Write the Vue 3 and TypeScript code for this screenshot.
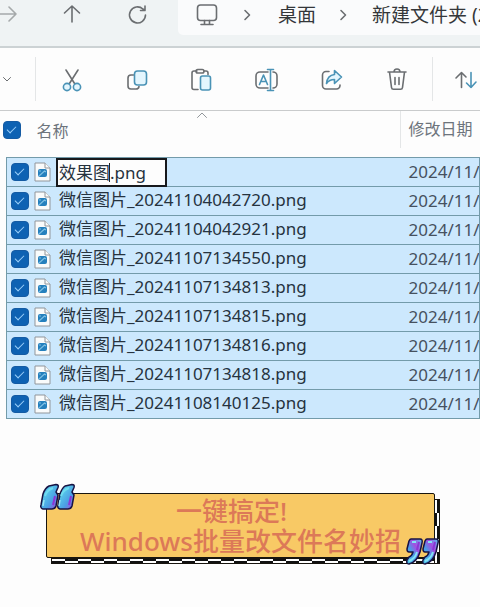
<script setup lang="ts">
import { ref } from 'vue'

interface FileRow {
  id: number
  name: string
  date: string
  selected: boolean
}

const names: string[] = [
  '效果图.png',
  '微信图片_20241104042720.png',
  '微信图片_20241104042921.png',
  '微信图片_20241107134550.png',
  '微信图片_20241107134813.png',
  '微信图片_20241107134815.png',
  '微信图片_20241107134816.png',
  '微信图片_20241107134818.png',
  '微信图片_20241108140125.png',
]

const files = ref<FileRow[]>(
  names.map((name, id) => ({ id, name, date: '2024/11/', selected: true })),
)
const renaming = ref(0)
const allSelected = ref(true)

function toggleAll() {
  files.value.forEach((file) => (file.selected = allSelected.value))
}
</script>

<template>
  <main class="explorer">
    <nav class="nav">
      <button class="nav-btn forward" aria-label="前进">
        <svg width="24" height="24" viewBox="0 0 24 24"><path d="M3 12h17M13 5l7 7-7 7" /></svg>
      </button>
      <button class="nav-btn" aria-label="向上">
        <svg width="24" height="24" viewBox="0 0 24 24"><path d="M12 20V4M4.500 11L12 4l7.500 7" /></svg>
      </button>
      <button class="nav-btn" aria-label="刷新">
        <svg width="24" height="24" viewBox="0 0 24 24"><path d="M20.500 13a8 8 0 1 1-2.600-6L20 8.500M20 4v4.500h-4.500" /></svg>
      </button>
      <div class="address">
        <svg class="monitor" width="24" height="24" viewBox="0 0 24 24">
          <rect x="2.500" y="2" width="19" height="15.500" rx="3" />
          <path d="M9.500 17.500v4M14.500 17.500v4M6 21.500h12" />
        </svg>
        <svg class="sep" width="12" height="12" viewBox="0 0 12 12"><path d="M4 1.500l4.500 4.500L4 10.500" /></svg>
        <a class="crumb" href="#desktop">桌面</a>
        <svg class="sep" width="12" height="12" viewBox="0 0 12 12"><path d="M4 1.500l4.500 4.500L4 10.500" /></svg>
        <a class="crumb" href="#folder">新建文件夹 (2</a>
      </div>
    </nav>

    <div class="toolbar" role="toolbar" aria-label="文件操作">
      <button class="more" aria-label="新建">
        <svg width="10" height="10" viewBox="0 0 10 10"><path d="M1.500 3.500L5 7l3.500-3.500" /></svg>
      </button>
      <div class="actions">
        <button class="tool" aria-label="剪切">
          <svg width="26" height="26" viewBox="0 0 26 26">
            <path d="M7 3l9.500 15M19 3L9.500 18" />
            <g class="blue fill"><circle cx="8" cy="20" r="3.600" /><circle cx="18" cy="20" r="3.600" /></g>
          </svg>
        </button>
        <button class="tool" aria-label="复制">
          <svg width="26" height="26" viewBox="0 0 26 26">
            <path d="M9.500 8H7a3 3 0 0 0-3 3v8a3 3 0 0 0 3 3h5a3 3 0 0 0 3-2.500" />
            <rect class="blue fill" x="10.500" y="4" width="12" height="14" rx="3" />
          </svg>
        </button>
        <button class="tool" aria-label="粘贴">
          <svg width="26" height="26" viewBox="0 0 26 26">
            <path d="M8 4H5a2 2 0 0 0-2 2v14.500a2 2 0 0 0 2 2h4M15 4h2a2 2 0 0 1 2 2v1.500" />
            <rect x="7" y="2.500" width="8" height="3.500" rx="1.750" />
            <rect class="blue fill" x="11.500" y="9" width="10" height="14" rx="2" />
          </svg>
        </button>
        <button class="tool" aria-label="重命名">
          <svg width="26" height="26" viewBox="0 0 26 26">
            <path d="M14 5H6a4 4 0 0 0-4 4v8a4 4 0 0 0 4 4h8M19 5a4 4 0 0 1 4 4v8a4 4 0 0 1-4 4" />
            <path class="blue" d="M16.500 3v20M13.500 2.500h6M13.500 23.500h6M5.500 17.500L9.500 8l4 9.500M7 14.500h5" />
          </svg>
        </button>
        <button class="tool" aria-label="共享">
          <svg width="26" height="26" viewBox="0 0 26 26">
            <path d="M10 4.500H7a3.500 3.500 0 0 0-3.500 3.500v10.500A3.500 3.500 0 0 0 7 22h10.500a3.500 3.500 0 0 0 3.500-3.500V18" />
            <path class="blue fill" d="M15.500 3.500L22.500 10l-7 6.500v-4c-4 0-6 1-8 4 .500-5 3-8.500 8-9z" />
          </svg>
        </button>
        <button class="tool" aria-label="删除">
          <svg width="26" height="26" viewBox="0 0 26 26">
            <path d="M4 5h18M10 5a3 3 0 0 1 6 0M5.500 5l2 15.500a2 2 0 0 0 2 1.800h7a2 2 0 0 0 2-1.800l2-15.500M11 10.500v7M15 10.500v7" />
          </svg>
        </button>
      </div>
      <button class="tool sort" aria-label="排序">
        <svg width="26" height="26" viewBox="0 0 26 26">
          <path d="M8.500 20.500v-15M3 11l5.500-5.500L13 10" />
          <path class="blue" d="M18 5.500v15M13.500 16l4.500 4.500L23 15" />
        </svg>
      </button>
    </div>

    <table class="list">
      <thead>
        <tr>
          <th class="name-col" scope="col">
            <svg class="sorted" width="12" height="8" viewBox="0 0 12 8"><path d="M1.500 6.500L6 2l4.500 4.500" /></svg>
            <div class="head-name">
              <input v-model="allSelected" class="check" type="checkbox" aria-label="全选" @change="toggleAll" />
              <span>名称</span>
            </div>
          </th>
          <th class="date-col" scope="col"><div class="head-date">修改日期</div></th>
        </tr>
      </thead>
      <tbody>
        <tr v-for="file in files" :key="file.id" :class="{ selected: file.selected }">
          <td>
            <div class="cell">
              <input :id="`file-${file.id}`" v-model="file.selected" class="check" type="checkbox" :aria-label="file.name" />
              <svg class="doc" width="17" height="20" viewBox="0 0 17 20">
                <path class="page" d="M1 1h10l5 5v13H1z" />
                <path class="page" d="M11 1v5h5" />
                <rect x="4" y="7" width="9" height="8" rx="2" fill="#2580bd" />
                <path d="M5 14l5.500-5L12 10M5 9h2" stroke="#7fc0e4" stroke-width="1.200" fill="none" />
              </svg>
              <span v-if="file.id === renaming" class="rename">
                <input v-model="file.name" class="rename-box" type="text" aria-label="文件名" />
                <i class="caret"></i>
              </span>
              <label v-else class="filename" :for="`file-${file.id}`">{{ file.name }}</label>
            </div>
          </td>
          <td class="date">{{ file.date }}</td>
        </tr>
      </tbody>
    </table>

    <section class="banner">
      <h1 class="title">
        <span class="line first">一键搞定!</span>
        <span class="line">Windows批量改文件名妙招</span>
      </h1>
      <svg class="quote open" width="36" height="28" viewBox="0 0 36 28">
        <defs>
          <linearGradient id="shine-open" x1="0" y1="0" x2="1" y2="1">
            <stop offset="0" stop-color="#5937c8" /><stop offset="0.300" stop-color="#58c9ea" />
            <stop offset="0.650" stop-color="#4b9fe4" /><stop offset="1" stop-color="#a943dc" />
          </linearGradient>
        </defs>
        <g fill="url(#shine-open)" stroke="#171343" stroke-width="1.500" stroke-linejoin="round">
          <path d="M9 3L16 1.500q3 0 2 3L16 9l2 3-2 11q-1 3-4 3H3q-3-1-2-4L3 11q2-6 6-8z" />
          <path d="M25 3l7-1.500q3 0 2 3L32 9l2 3-2 11q-1 3-4 3h-8q-3-1-2-4l2-11q2-6 5-8z" />
        </g>
        <path d="M5 13q2-6 8-8M21 13q2-6 8-8" fill="none" stroke="#6fdcf0" stroke-width="2" />
        <path d="M15 13l-2 9M31 13l-2 9" stroke="#8c35d5" stroke-width="2" />
        <path d="M4 17l-1 6M20 17l-1 6" stroke="#9be6f5" stroke-width="1.500" />
      </svg>
      <svg class="quote close" width="34" height="28" viewBox="0 0 34 28">
        <defs>
          <linearGradient id="shine-close" x1="0" y1="1" x2="1" y2="0">
            <stop offset="0" stop-color="#52cce9" /><stop offset="0.400" stop-color="#4b9be9" />
            <stop offset="0.650" stop-color="#a74be1" /><stop offset="1" stop-color="#4fc9ef" />
          </linearGradient>
        </defs>
        <g fill="url(#shine-close)" stroke="#171343" stroke-width="1.500" stroke-linejoin="round">
          <path d="M6 2h9q3 0 2 4l-2 9Q12 25 4 27q-3 0-2-4l2-3q3-1 4-5H4q-2 0-2-3l2-8q1-2 2-2z" />
          <path d="M22 2h9q3 0 2 4l-2 9q-3 10-11 12-3 0-2-4l2-3q3-1 4-5h-4q-2 0-2-3l2-8q1-2 2-2z" />
        </g>
        <path d="M7 5h4M23 5h4M4 24q6-2 8-9M20 24q6-2 8-9" fill="none" stroke="#83e4f5" stroke-width="2" />
        <path d="M14 5l-2 8M30 5l-2 8" stroke="#8c35d5" stroke-width="2" />
      </svg>
    </section>
  </main>
</template>

<style>
body {
  margin: 0;
  background: #fdfdfd;
}
</style>

<style scoped>
.explorer {
  overflow: hidden;
  padding-bottom: 40px;
  background: #fdfdfd;
  color: #26333f;
  font-family: 'Noto Sans', 'Noto Sans CJK SC', sans-serif;
  font-size: 17px;
}

button {
  display: flex;
  align-items: center;
  justify-content: center;
  padding: 0;
  border: 0;
  background: none;
}

svg {
  flex: none;
}

.nav svg,
.toolbar svg,
.sorted {
  fill: none;
  stroke: #6b6e71;
  stroke-width: 1.6;
  stroke-linecap: round;
  stroke-linejoin: round;
}

.nav {
  display: flex;
  align-items: flex-start;
  height: 46px;
  border-bottom: 2px solid #ccd2d4;
  background: #eff3f4;
}

.nav-btn {
  flex: none;
  width: 65px;
  height: 28px;
}

.nav .forward {
  width: 40px;
  justify-content: flex-start;
  margin-left: -4px;
  margin-right: 3px;
}

.nav .forward svg {
  stroke: #a5a9aa;
}

.address {
  display: flex;
  flex: 1;
  align-items: center;
  min-width: 0;
  height: 35px;
  margin-left: 9px;
  padding-left: 17px;
  box-sizing: border-box;
  padding-bottom: 6px;
  overflow: hidden;
  border-bottom-left-radius: 5px;
  background: #fafbfc;
}

.address .monitor {
  margin-right: 22px;
}

.crumb {
  margin: 0 21px 0 25px;
  color: #34373a;
  font-size: 19px;
  line-height: 28px;
  text-decoration: none;
  white-space: nowrap;
}

.crumb:last-child {
  margin: 0 0 0 23px;
}

.toolbar {
  display: flex;
  align-items: center;
  height: 62px;
  border-bottom: 1px solid #c9cbcc;
}

.more {
  flex: none;
  width: 35px;
  padding-left: 2px;
  justify-content: flex-start;
}

.toolbar .more svg {
  stroke-width: 1;
}

.actions {
  display: flex;
  align-items: center;
  flex: none;
  height: 44px;
  padding: 0 3px;
  border-left: 1px solid #e4e6e7;
  border-right: 1px solid #e4e6e7;
}

.tool {
  width: 65px;
  height: 44px;
  padding-top: 2px;
}

.tool.sort {
  flex: none;
}

.toolbar .blue {
  stroke: #4a93b6;
}

.toolbar .fill {
  fill: #e4f6fe;
}

.list {
  width: calc(100% - 6px);
  margin-left: 6px;
  border-collapse: collapse;
  table-layout: fixed;
}

th {
  position: relative;
  height: 46px;
  padding: 0;
  color: #6d747c;
  font-size: 16px;
  font-weight: 400;
  text-align: left;
  vertical-align: top;
}

.date-col {
  width: 80px;
}

.sorted {
  position: absolute;
  top: 0;
  left: 189px;
  stroke: #92979b;
  stroke-width: 1;
}

.head-name {
  display: flex;
  align-items: center;
  gap: 16px;
  height: 37px;
  margin-left: -4px;
}

.head-date {
  height: 37px;
  padding-left: 8px;
  border-left: 1px solid #e4e6e7;
  line-height: 37px;
  white-space: nowrap;
}

.check {
  flex: none;
  width: 18px;
  height: 18px;
  margin: 0;
  appearance: none;
  border: 1px solid #155ba3;
  border-radius: 4px;
  background: #fff;
}

.check:checked {
  background: linear-gradient(#0e62b3, #0e62b3);
}

.check:checked::after {
  display: block;
  width: 8px;
  height: 4px;
  margin: 4px 0 0 3px;
  border-bottom: 1px solid #9cd0fa;
  border-left: 1px solid #9cd0fa;
  content: '';
  transform: rotate(-45deg);
}

tbody tr {
  height: 29px;
  border: 1px solid #739baa;
}

tbody tr.selected {
  background: #cce8fd;
}

td {
  height: 28px;
  padding: 0;
  line-height: 28px;
  white-space: nowrap;
}

.date {
  padding-left: 9px;
  overflow: hidden;
  color: #46515f;
}

.cell {
  display: flex;
  align-items: center;
  height: 28px;
  padding-left: 4px;
}

.filename,
.date {
  line-height: 26px;
}

.filename {
  height: 28px;
}

.doc {
  margin: 0 8px 0 5px;
}

.page {
  fill: #f9fbfb;
  stroke: #91969b;
}

.rename {
  position: relative;
  margin-left: -3px;
}

.rename-box {
  display: block;
  box-sizing: border-box;
  width: 111px;
  height: 29px;
  padding: 0 1px 2px;
  border: 2px solid #17191c;
  outline: 0;
  background: #fdfdfd;
  color: #26333f;
  font: inherit;
}

.caret {
  position: absolute;
  top: 5px;
  left: 53px;
  width: 1px;
  height: 19px;
  background: #222;
}

.banner {
  position: relative;
  margin: 74px 45px 0 46px;
  border: 1px solid #18150f;
  border-radius: 2px;
  background: #f8c965;
}

.banner::before,
.banner::after {
  position: absolute;
  border: 1px solid #18150f;
  content: '';
}

.banner::before {
  right: -6px;
  bottom: -7px;
  left: 4px;
  height: 4px;
  background: repeating-conic-gradient(#111 0 25%, #fff 0 50%) 0 0 / 26px 4px;
}

.banner::after {
  top: 5px;
  right: -6px;
  bottom: -7px;
  width: 4px;
  background: repeating-conic-gradient(#111 0 25%, #fff 0 50%) 0 0 / 4px 26px;
}

.title {
  display: flex;
  flex-direction: column;
  margin: 0;
  padding: 2px 0 1px;
  color: #dc7958;
  font-family: 'Noto Sans', 'Noto Sans CJK SC', sans-serif;
  font-size: 26px;
  font-weight: 500;
  line-height: 30px;
  text-align: center;
  white-space: nowrap;
}

.first {
  padding-right: 18px;
}

.quote {
  position: absolute;
  z-index: 1;
}

.open {
  top: -11px;
  left: -7px;
}

.close {
  right: -5px;
  bottom: -8px;
}
</style>
